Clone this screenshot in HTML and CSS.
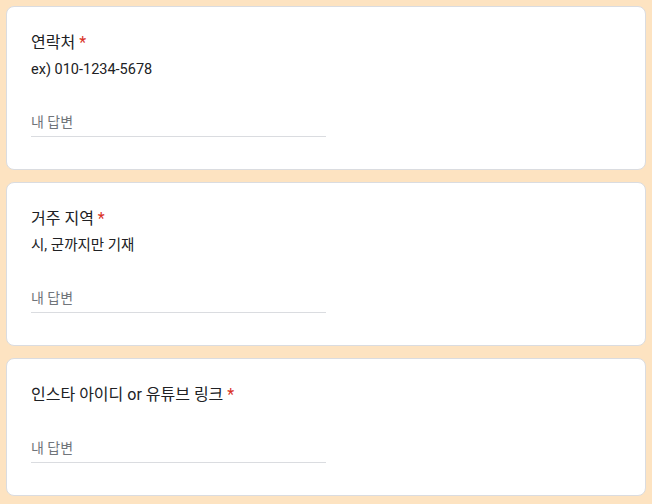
FILE: index.html
```html
<!DOCTYPE html>
<html lang="ko">
<head>
<meta charset="utf-8">
<title>Form</title>
<link rel="stylesheet" href="styles.css">
</head>
<body>
<main class="form">
  <section class="card">
    <div class="title">연락처<span class="req">*</span></div>
    <div class="desc">ex) 010-1234-5678</div>
    <div class="answer"><span class="placeholder">내 답변</span></div>
  </section>
  <section class="card">
    <div class="title">거주 지역<span class="req">*</span></div>
    <div class="desc">시, 군까지만 기재</div>
    <div class="answer"><span class="placeholder">내 답변</span></div>
  </section>
  <section class="card">
    <div class="title">인스타 아이디 or 유튜브 링크<span class="req">*</span></div>
    <div class="answer"><span class="placeholder">내 답변</span></div>
  </section>
</main>
</body>
</html>
```
FILE: styles.css
```css
html, body {
  margin: 0;
  padding: 0;
}
body {
  background: #fde3c1;
  font-family: Roboto, "Noto Sans CJK KR", sans-serif;
  color: #202124;
}
.form {
  padding: 6px;
  display: flex;
  flex-direction: column;
  gap: 12px;
}
.card {
  background: #ffffff;
  border: 1px solid #dadce0;
  border-radius: 8px;
  padding: 24px;
}
.title {
  font-size: 16px;
  line-height: 24px;
}
.req {
  color: #d93025;
  margin-left: 4px;
}
.desc {
  font-size: 14.5px;
  line-height: 24px;
  padding-top: 3px;
  margin-bottom: -1px;
}
.answer {
  width: 50%;
  padding-top: 29px;
  padding-bottom: 2px;
  border-bottom: 1px solid #dadce0;
  margin-bottom: 8px;
}
.placeholder {
  display: block;
  font-size: 14px;
  line-height: 24px;
  color: #70757a;
}
```
